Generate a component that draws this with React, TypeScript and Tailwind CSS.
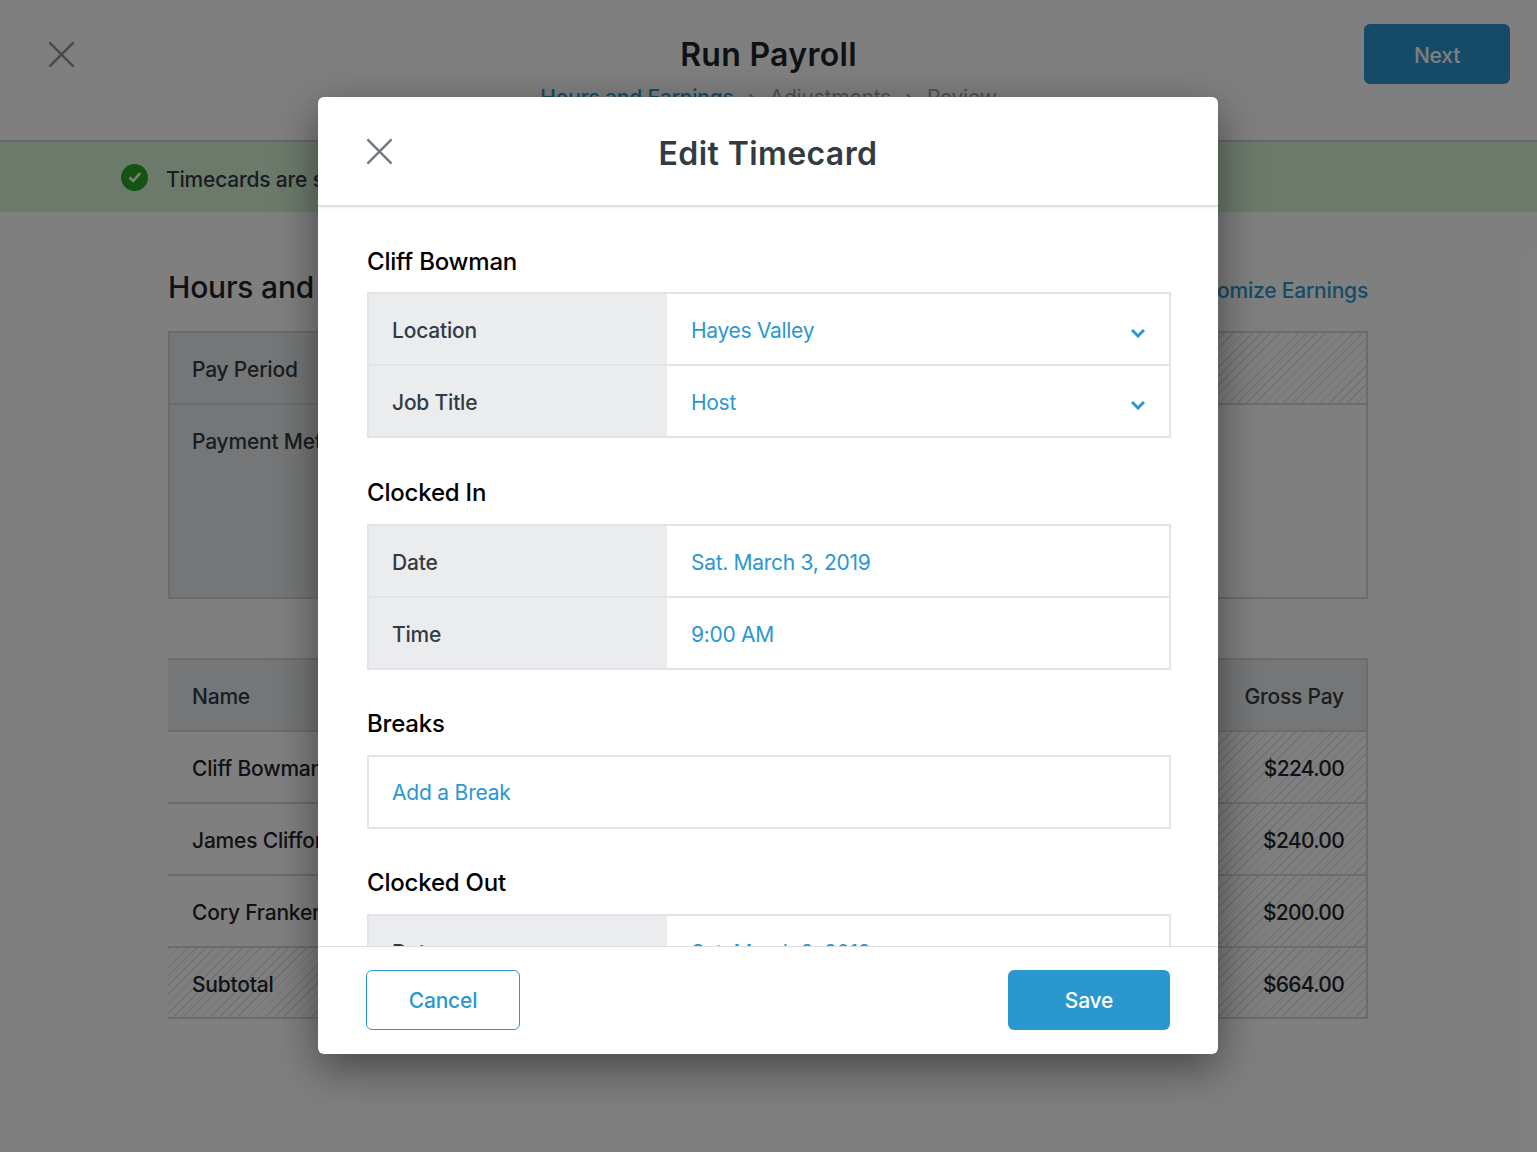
import React from "react";

const hatch =
  "bg-[repeating-linear-gradient(135deg,#dfe3e6_0px,#dfe3e6_1.2px,#fff_1.2px,#fff_6.5px)]";

const CloseIcon = ({ className }: { className: string }) => (
  <svg viewBox="0 0 28 28" className={className} fill="none" stroke="currentColor" strokeWidth="2.6">
    <path d="M1.5 1.5L26.5 26.5M26.5 1.5L1.5 26.5" />
  </svg>
);

const Chevron = () => (
  <svg viewBox="0 0 14 10" className="mt-[3px] h-[10px] w-[14px] text-[#2b97cf]" fill="none" stroke="currentColor" strokeWidth="3">
    <path d="M1 2l6 6 6-6" />
  </svg>
);

const Row = ({ label, value, select, first }: { label: string; value: string; select?: boolean; first?: boolean }) => (
  <div className={`flex ${first ? "h-[70px]" : "h-[72px] border-t-2 border-[#e2e4e7]"}`}>
    <div className="flex w-[298px] shrink-0 items-center bg-[#ebecee] pl-[23px] pt-[4px] font-[550] text-[#333b42]">{label}</div>
    <div className="flex flex-1 items-center justify-between pl-[24px] pr-[24px] pt-[4px] tracking-[-0.3px] text-[#2b97cf]">
      <span>{value}</span>
      {select && <Chevron />}
    </div>
  </div>
);

const BackRow = ({ name, pay, last }: { name: string; pay: string; last?: boolean }) => (
  <div className={`flex items-center justify-between pl-[24px] font-[550] text-[#1f2429] ${last ? `h-[71px] ${hatch}` : "h-[72px] bg-white"} border-t-2 border-[#d5d8db]`}>
    <span className={last ? "pt-[5px]" : "pt-[4px]"}>{name}</span>
    <span className={`flex h-full w-[200px] items-center justify-end pr-[22px] tracking-[-0.7px] ${last ? "pt-[5px]" : "pt-[4px]"} ${hatch}`}>{pay}</span>
  </div>
);

export default function App() {
  return (
    <div className="relative h-[1152px] w-full overflow-hidden bg-white font-['Inter',sans-serif] text-[21px] tracking-[-0.2px]">
      {/* page behind the modal */}
      <header className="grid h-[142px] grid-cols-[1fr_auto_1fr] border-b-2 border-[#cdd0d3] px-[27px] pt-[24px]">
        <div className="pl-[21px] pt-[17px]">
          <CloseIcon className="h-[27px] w-[27px] text-[#8f9398]" />
        </div>
        <div className="flex flex-col items-center">
          <h1 className="text-[32px] font-semibold leading-[62px] tracking-[0.3px] text-[#1f2429]">Run Payroll</h1>
          <div className="flex gap-[14px] leading-[24px] text-[#9a9ea3]">
            <span className="font-medium text-[#2b97cf]">Hours and Earnings</span>
            <span>›</span>
            <span>Adjustments</span>
            <span>›</span>
            <span>Review</span>
          </div>
        </div>
        <div className="flex justify-end">
          <button className="h-[60px] w-[146px] rounded-[6px] bg-[#2b97cf] pt-[3px] font-[550] text-white">Next</button>
        </div>
      </header>
      <div className="flex h-[70px] items-center gap-[18px] bg-[#d6f4d6] pl-[121px] font-[550] text-[#333b42]">
        <span className="flex h-[27px] w-[27px] items-center justify-center rounded-full bg-[#2ba72b]">
          <svg viewBox="0 0 16 16" className="h-[16px] w-[16px] text-white" fill="none" stroke="currentColor" strokeWidth="2.6">
            <path d="M2.5 8.5l3.7 3.5 7-8" />
          </svg>
        </span>
        <span className="pt-[5px]">Timecards are submitted</span>
      </div>
      <main className="px-[168px] pt-[54px]">
        <div className="flex w-[1200px] items-center justify-between">
          <h2 className="text-[30px] font-[550] leading-[42px] text-[#1f2429]">Hours and Earnings</h2>
          <a className="pt-[8px] font-[550] text-[#2b97cf]">Customize Earnings</a>
        </div>
        <div className="mt-[23px] h-[268px] w-[1200px] border-2 border-[#d5d8db] font-[550] text-[#333b42]">
          <div className="flex h-[70px]">
            <div className="flex w-[300px] items-center bg-[#ebecee] pl-[22px] pt-[4px]">Pay Period</div>
            <div className={`flex-1 ${hatch}`} />
          </div>
          <div className="flex h-[194px] border-t-2 border-[#d5d8db]">
            <div className="w-[300px] bg-[#ebecee] pl-[22px] pt-[21px]">Payment Method</div>
          </div>
        </div>
        <div className="mt-[59px] w-[1200px] border-b-2 border-r-2 border-[#d5d8db]">
          <div className="flex h-[72px] items-center justify-between border-t-2 border-[#d5d8db] bg-[#ebecee] pl-[24px] pr-[22px] font-[550] text-[#333b42]">
            <span className="pt-[4px]">Name</span>
            <span className="pt-[4px]">Gross Pay</span>
          </div>
          <BackRow name="Cliff Bowman" pay="$224.00" />
          <BackRow name="James Clifford" pay="$240.00" />
          <BackRow name="Cory Franken" pay="$200.00" />
          <BackRow name="Subtotal" pay="$664.00" last />
        </div>
      </main>

      {/* dim layer */}
      <div className="absolute inset-0 bg-black/50" />

      {/* modal */}
      <div className="absolute left-[318px] top-[97px] flex h-[957px] w-[900px] flex-col overflow-hidden rounded-[6px] bg-white shadow-[0_14px_44px_rgba(0,0,0,0.45)]">
        <div className="relative flex h-[110px] shrink-0 items-center justify-center border-b-2 border-[#dcdee0] shadow-[0_1px_2px_rgba(0,0,0,0.06)]">
          <CloseIcon className="absolute left-[48px] top-[41px] h-[27px] w-[27px] text-[#737a81]" />
          <h2 className="pt-[6px] text-[32px] font-semibold tracking-[0.4px] text-[#333b42]">Edit Timecard</h2>
        </div>
        <div className="min-h-0 flex-1 overflow-hidden pl-[49px] pr-[47px] text-black">
          <h3 className="pt-[37px] text-[24px] font-[550] leading-[36px]">Cliff Bowman</h3>
          <div className="mt-[12px] border-2 border-[#e2e4e7]">
            <Row first label="Location" value="Hayes Valley" select />
            <Row label="Job Title" value="Host" select />
          </div>
          <h3 className="mt-[37px] text-[24px] font-[550] leading-[36px]">Clocked In</h3>
          <div className="mt-[13px] border-2 border-[#e2e4e7]">
            <Row first label="Date" value="Sat. March 3, 2019" />
            <Row label="Time" value="9:00 AM" />
          </div>
          <h3 className="mt-[36px] text-[24px] font-[550] leading-[36px]">Breaks</h3>
          <div className="mt-[13px] flex h-[74px] items-center border-2 border-[#e2e4e7] pl-[23px] pt-[2px] text-[#2b97cf]">Add a Break</div>
          <h3 className="mt-[36px] text-[24px] font-[550] leading-[36px]">Clocked Out</h3>
          <div className="mt-[13px] border-2 border-[#e2e4e7]">
            <Row first label="Date" value="Sat. March 3, 2019" />
          </div>
        </div>
        <div className="flex h-[108px] shrink-0 items-start justify-between border-t border-[#dcdee0] pl-[48px] pr-[48px] pt-[23px] font-[550]">
          <button className="h-[60px] w-[154px] rounded-[6px] border-[1.5px] border-[#2b97cf] pt-[2px] text-[#2b97cf]">Cancel</button>
          <button className="h-[60px] w-[162px] rounded-[6px] bg-[#2b97cf] pt-[2px] text-white">Save</button>
        </div>
      </div>
    </div>
  );
}
